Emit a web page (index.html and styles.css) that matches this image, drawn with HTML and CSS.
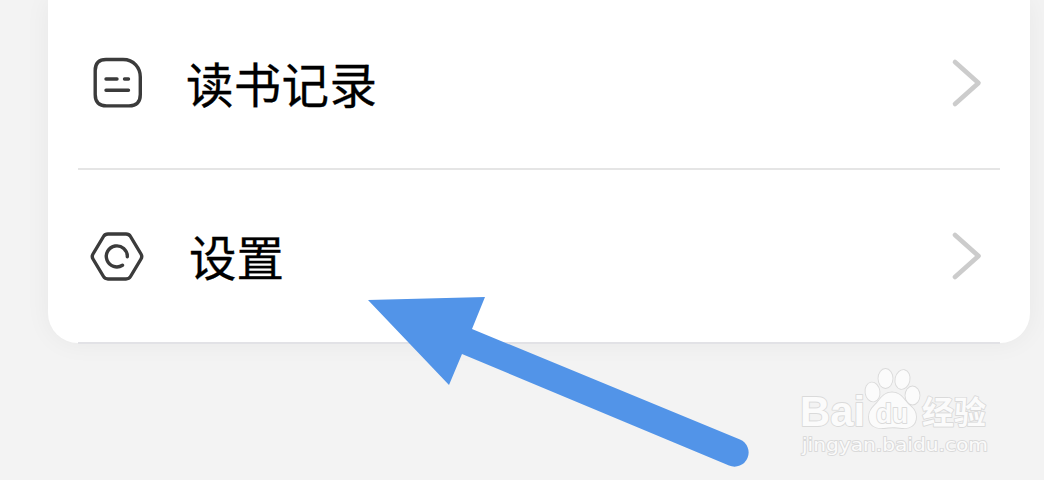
FILE: index.html
```html
<!DOCTYPE html>
<html lang="zh-CN">
<head>
<meta charset="utf-8">
<title>设置</title>
<link rel="stylesheet" href="styles.css">
</head>
<body>
<main class="screen">
  <section class="card">
    <div class="row">
      <svg class="icon" viewBox="0 0 56 56">
        <path d="M17 4.500H34C45 4.500 51.300 13 51.300 22V39.500Q51.300 50.900 40 50.900H17.500Q6.200 50.900 6.200 39.500V15.500Q6.200 4.500 17 4.500Z"/>
        <path d="M17 24H28M35.500 24H39.500M17 35.300H39.500"/>
      </svg>
      <span class="label label-records">读书记录</span>
      <svg class="chevron" viewBox="0 0 32 50"><path d="M5 4L28.500 25L5 46"/></svg>
    </div>
    <div class="row row-last">
      <svg class="icon" viewBox="0 0 56 56">
        <path d="M19 6H37Q40 6 41.500 8.500L52 26Q53.500 28.500 52 31L41.500 48.500Q40 51 37 51H19Q16 51 14.500 48.500L4 31Q2.500 28.500 4 26L14.500 8.500Q16 6 19 6Z"/>
        <path d="M38.300 28.800A10.500 10.500 0 1 0 33.500 37.200"/>
      </svg>
      <span class="label label-settings">设置</span>
      <svg class="chevron" viewBox="0 0 32 50"><path d="M5 4L28.500 25L5 46"/></svg>
    </div>
  </section>
  <svg class="arrow" viewBox="0 0 384 172">
    <path d="M1 3L118 0L105 32L373 142.500A13.500 13.500 0 0 1 362 168.500L95 57L82 88Z"/>
  </svg>
  <svg class="watermark" viewBox="0 0 210 105">
    <g class="logo">
      <text class="bai" x="10" y="66" textLength="65" lengthAdjust="spacingAndGlyphs">Bai</text>
      <ellipse cx="82.500" cy="32" rx="7" ry="9.500" transform="rotate(-8 82.500 32)"/>
      <ellipse cx="95.500" cy="18.500" rx="7" ry="9.500"/>
      <ellipse cx="112.500" cy="19.500" rx="7" ry="9.500" transform="rotate(12 112.500 19.500)"/>
      <ellipse cx="122.500" cy="35.500" rx="7" ry="9"/>
      <path d="M102 32.500C110 32.500 113 38 118 44C123 48 126 51 126 57C126 65 120 69 112 68C105 67 100 67 94 68C85 69 79 65 79 57C79 51 82 48 87 43C91 38 94 32.500 102 32.500Z"/>
      <text class="du" x="86" y="62.500" textLength="32" lengthAdjust="spacingAndGlyphs">du</text>
      <text class="exp" x="132" y="64" textLength="64" lengthAdjust="spacingAndGlyphs">经验</text>
      <text class="url" x="12" y="91" textLength="186" lengthAdjust="spacingAndGlyphs">jingyan.baidu.com</text>
    </g>
  </svg>
</main>
</body>
</html>
```
FILE: styles.css
```css
body {
  margin: 0;
  background: #f3f3f3;
  font-family: "Noto Sans CJK SC", sans-serif;
}

.screen {
  position: relative;
  width: 1044px;
  height: 480px;
  overflow: hidden;
}

.card {
  box-sizing: border-box;
  width: 982px;
  height: 343px;
  margin-left: 48px;
  padding: 0 30px;
  background: #fff;
  border-radius: 0 0 30px 30px;
  box-shadow: 0 0 26px rgba(0, 0, 0, 0.05);
}

.row {
  box-sizing: border-box;
  display: flex;
  align-items: center;
  height: 170px;
  padding: 0 18px 2px 11px;
  border-bottom: 2px solid #e5e5e5;
}

.row-last {
  height: 174px;
  padding-bottom: 0;
  border-bottom-color: #e2e2e6;
}

.icon {
  width: 56px;
  height: 56px;
  fill: none;
  stroke: #3b3b3b;
  stroke-width: 3.4;
  stroke-linecap: round;
  stroke-linejoin: round;
}

.label {
  margin-left: 41px;
  color: #000;
  font-size: 47.5px;
  line-height: 64px;
  -webkit-text-stroke: 0.3px #000;
}

.label-records {
  letter-spacing: 0.3px;
}

.label-settings {
  margin-left: 44px;
}

.chevron {
  width: 32px;
  height: 50px;
  margin-left: auto;
  fill: none;
  stroke: #ccc;
  stroke-width: 4.6;
  stroke-linecap: round;
  stroke-linejoin: round;
}

.arrow {
  position: absolute;
  left: 367px;
  top: 297px;
  width: 384px;
  height: 172px;
  fill: #5294e8;
}

.watermark {
  position: absolute;
  left: 790px;
  top: 360px;
  width: 210px;
  height: 105px;
}

.logo {
  fill: #fbfbfb;
  stroke: #dadada;
  stroke-width: 1.8;
  stroke-linejoin: round;
  paint-order: stroke;
}

.bai {
  font: bold 42px "Liberation Sans", sans-serif;
}

.du {
  font: bold 27px "Liberation Sans", sans-serif;
}

.exp {
  font: bold 32px "Noto Sans CJK SC", sans-serif;
}

.url {
  font: 18px "DejaVu Sans", sans-serif;
}
```
